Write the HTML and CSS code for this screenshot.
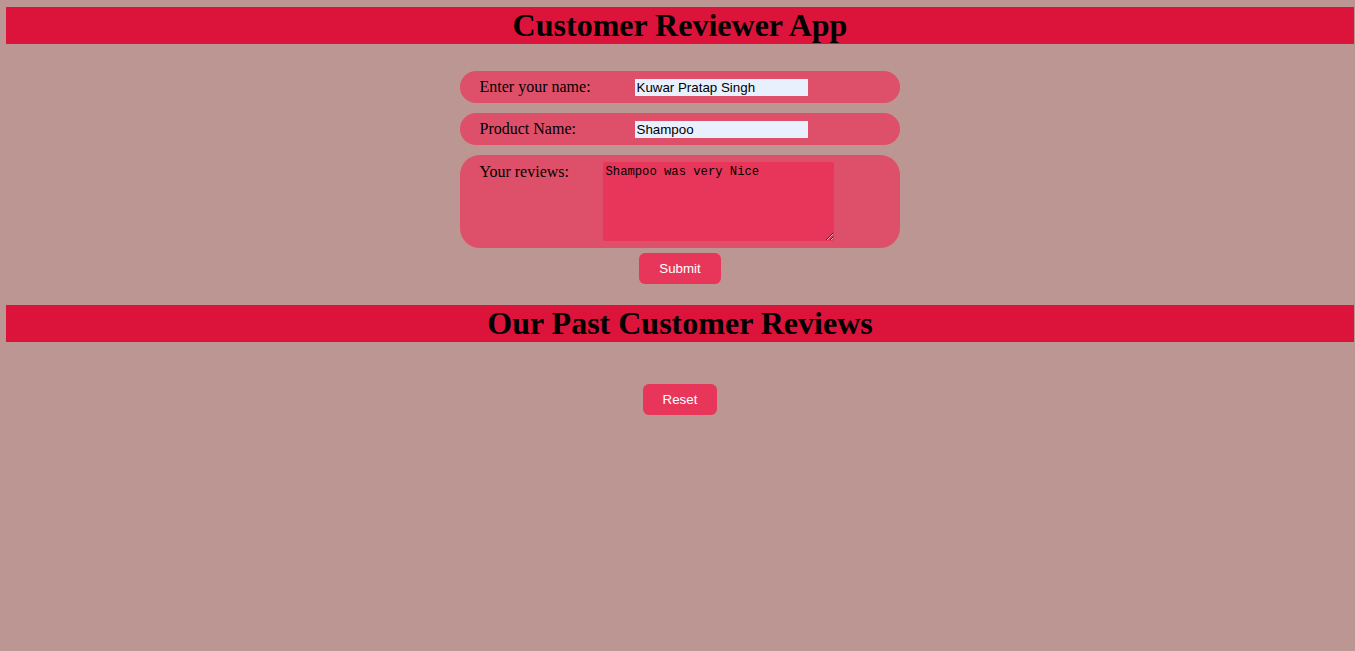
FILE: index.html
```html
<!DOCTYPE html>
<html>
<head>
<meta charset="utf-8">
<title>Customer Reviewer App</title>
<link rel="stylesheet" href="styles.css">
</head>
<body>
<div class="page">
  <h1 class="banner">Customer Reviewer App</h1>
  <form class="review-form">
    <div class="row">
      <label class="label label-wide" for="name">Enter your name:</label>
      <input class="field" id="name" type="text" value="Kuwar Pratap Singh">
    </div>
    <div class="row">
      <label class="label label-wide" for="product">Product Name:</label>
      <input class="field" id="product" type="text" value="Shampoo">
    </div>
    <div class="row row-tall">
      <label class="label label-narrow" for="review">Your reviews:</label>
      <textarea class="review-box" id="review">Shampoo was very Nice</textarea>
    </div>
    <button class="btn btn-submit" type="button">Submit</button>
  </form>
  <h1 class="banner banner-second">Our Past Customer Reviews</h1>
  <div class="reset-wrap">
    <button class="btn btn-reset" type="button">Reset</button>
  </div>
</div>
</body>
</html>
```
FILE: styles.css
```css
html, body {
  margin: 0;
  padding: 0;
  background: #bc9692;
  height: 100%;
}
.page {
  padding: 7px 1px 0 6px;
  font-family: "Liberation Serif", "Times New Roman", serif;
}
.banner {
  margin: 0;
  height: 37px;
  background: #dc143c;
  color: #000;
  font-size: 32px;
  font-weight: bold;
  line-height: 37px;
  text-align: center;
}
.review-form {
  display: flex;
  flex-direction: column;
  align-items: center;
  gap: 10px;
  padding-top: 27px;
}
.row {
  box-sizing: border-box;
  width: 440px;
  height: 32px;
  border-radius: 16px;
  background: #de5069;
  display: flex;
  align-items: center;
  padding-left: 20px;
  margin-left: -1px;
}
.row-tall {
  height: 93px;
  border-radius: 20px;
  align-items: flex-start;
  padding-top: 7px;
}
.label {
  font-size: 16px;
  color: #000;
}
.label-wide { width: 155px; }
.label-narrow { width: 123px; padding-top: 1px; }
.field {
  box-sizing: border-box;
  width: 173px;
  height: 17px;
  border: none;
  padding: 0 2px;
  margin: 0;
  background: #e8f0fe;
  font-family: "Liberation Sans", Arial, sans-serif;
  font-size: 13.33px;
  color: #000;
  outline: none;
}
.review-box {
  box-sizing: border-box;
  width: 231px;
  height: 79px;
  border: none;
  border-radius: 2px;
  padding: 3px 3px 2px;
  margin: 0;
  background: #e8365a;
  font-family: "Liberation Mono", "DejaVu Sans Mono", monospace;
  font-size: 12.2px;
  color: #000;
  outline: none;
}
.btn {
  height: 31px;
  border: none;
  border-radius: 6px;
  background: #e8365a;
  color: #fff;
  font-family: "Liberation Sans", Arial, sans-serif;
  font-size: 13.33px;
  padding: 0;
  cursor: pointer;
}
.btn-submit {
  width: 82px;
  margin-top: -5px;
}
.banner-second {
  margin-top: 21px;
}
.reset-wrap {
  display: flex;
  justify-content: center;
  padding-top: 42px;
}
.btn-reset {
  width: 74px;
}
```
